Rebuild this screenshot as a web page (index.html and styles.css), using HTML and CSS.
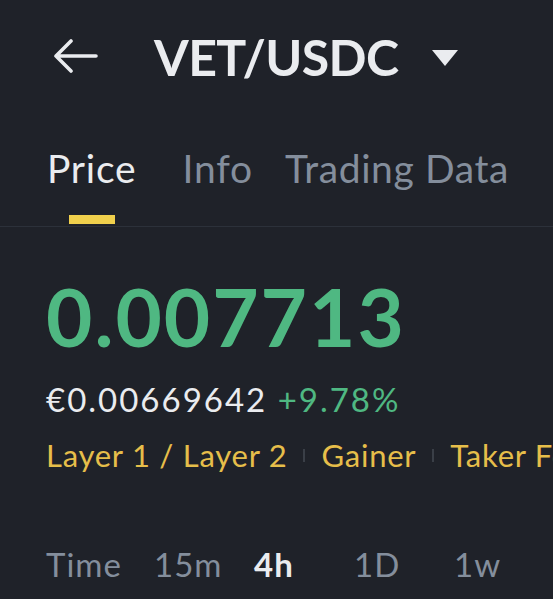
FILE: index.html
```html
<!DOCTYPE html>
<html lang="en">
<head>
    <meta charset="UTF-8">
    <title>VET/USDC</title>
    <link rel="stylesheet" href="styles.css">
</head>
<body>
<div class="page">
    <div class="header">
        <span class="back">
            <svg width="46" height="36" viewBox="0 0 46 36">
                <path d="M44 17H4M19 2L4 17L19 32" fill="none" stroke="#eaecef" stroke-width="3.6" stroke-linecap="round" stroke-linejoin="round"/>
            </svg>
        </span>
        <span class="pair">VET/USDC</span>
        <span class="caret"></span>
    </div>

    <div class="tabs">
        <div class="tab active"><span>Price</span><i></i></div>
        <div class="tab"><span>Info</span></div>
        <div class="tab data"><span>Trading Data</span></div>
    </div>

    <div class="quote">
        <div class="last">0.007713</div>
        <div class="sub">
            <span class="fiat">€0.00669642</span>
            <span class="change">+9.78%</span>
        </div>
        <div class="tags">
            <span>Layer 1 / Layer 2</span>
            <b></b>
            <span>Gainer</span>
            <b></b>
            <span>Taker Fee</span>
        </div>
    </div>

    <div class="periods">
        <span>Time</span>
        <span>15m</span>
        <span class="on">4h</span>
        <span>1D</span>
        <span>1w</span>
    </div>
</div>
</body>
</html>
```

FILE: styles.css
```css
* {
    margin: 0;
    padding: 0;
    box-sizing: border-box;
}

body {
    background: #1f2229;
    font-family: Lato, "Noto Sans", sans-serif;
    color: #eaecef;
    overflow: hidden;
}

.page {
    width: 553px;
    height: 599px;
    overflow: hidden;
}

.header {
    display: flex;
    align-items: center;
    height: 114px;
    padding-left: 52px;
}

.back {
    display: flex;
    width: 46px;
    height: 36px;
}

.pair {
    margin-left: 56px;
    font-size: 50px;
    font-weight: 700;
    line-height: 60px;
    letter-spacing: -0.6px;
    white-space: nowrap;
}

.caret {
    margin-left: 34px;
    margin-top: 1px;
    width: 0;
    height: 0;
    border-left: 13px solid transparent;
    border-right: 13px solid transparent;
    border-top: 16px solid #eaecef;
}

.tabs {
    display: flex;
    align-items: flex-start;
    gap: 46px;
    height: 113px;
    padding: 30px 0 0 47px;
    border-bottom: 1px solid #2c313a;
    white-space: nowrap;
}

.tab {
    display: flex;
    flex-direction: column;
    align-items: center;
    font-size: 39px;
    line-height: 48px;
    letter-spacing: 0.8px;
    color: #848e9c;
}

.tab.active {
    color: #eaecef;
}

.tab.data {
    margin-left: -14px;
    letter-spacing: 0.6px;
}

.tab i {
    display: block;
    width: 46px;
    height: 9px;
    margin-top: 23px;
    background: #f0d04c;
}

.quote {
    padding: 44px 0 0 46px;
}

.last {
    font-size: 80px;
    font-weight: 700;
    line-height: 90px;
    letter-spacing: 2px;
    color: #4fb882;
}

.sub {
    margin-top: 18px;
    font-size: 33px;
    line-height: 40px;
    letter-spacing: 2px;
    white-space: nowrap;
}

.change {
    color: #4fb882;
}

.tags {
    display: flex;
    align-items: center;
    gap: 16px;
    margin-top: 16px;
    font-size: 31px;
    line-height: 40px;
    letter-spacing: 0.75px;
    color: #e6be4a;
    white-space: nowrap;
}

.tags b {
    flex: none;
    width: 2px;
    height: 13px;
    background: #3a3f47;
}

.periods {
    display: grid;
    grid-template-columns: 108px repeat(4, 100px);
    padding: 69px 0 0 46px;
    font-size: 33px;
    line-height: 40px;
    letter-spacing: 1px;
    color: #848e9c;
    white-space: nowrap;
}

.periods .on {
    color: #eaecef;
    font-weight: 700;
}
```
